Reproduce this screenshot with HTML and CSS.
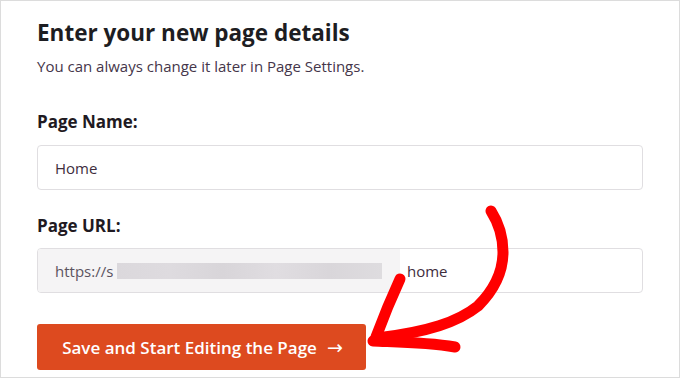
FILE: index.html
```html
<!DOCTYPE html>
<html>
<head>
<meta charset="utf-8">
<link rel="stylesheet" href="styles.css">
</head>
<body>
<div class="frame">
  <h1 class="title">Enter your new page details</h1>
  <p class="sub">You can always change it later in Page Settings.</p>
  <label class="label label-name">Page Name:</label>
  <div class="input"><span class="value">Home</span></div>
  <label class="label label-url">Page URL:</label>
  <div class="input url">
    <div class="prefix"><span class="proto">https://s</span><span class="blur"></span></div>
    <div class="slug">home</div>
  </div>
  <div class="actions">
    <button class="btn">Save and Start Editing the Page <span class="arr">&rarr;</span></button>
  </div>
  <svg class="arrow" width="680" height="378" viewBox="0 0 680 378">
    <g fill="none" stroke="#ff0000" stroke-linecap="round" stroke-linejoin="round">
      <path d="M491 211 C 498 222, 503 236, 503 252 C 503 272, 494 290, 478 306 C 458 322, 428 332, 377 338" stroke-width="11"/>
      <path d="M400 279 C 394 292, 386 310, 376 337" stroke-width="11"/>
      <path d="M373 341 C 395 342, 425 342, 455 347" stroke-width="11"/>
    </g>
  </svg>
</div>
</body>
</html>
```
FILE: styles.css
```css
html, body {
  margin: 0;
  padding: 0;
  background: #ffffff;
}
body {
  font-family: "Open Sans", "Noto Sans", sans-serif;
}
.frame {
  position: relative;
  box-sizing: border-box;
  width: 680px;
  height: 378px;
  border: 1px solid #dcdcdc;
  padding: 17px 36px 0 36px;
  display: flex;
  flex-direction: column;
  overflow: hidden;
}
.title {
  margin: 0;
  font-size: 22.5px;
  line-height: 30px;
  font-weight: 700;
  color: #1d1d22;
}
.sub {
  margin: 8px 0 0 0;
  font-size: 15px;
  line-height: 20px;
  color: #45364a;
}
.label {
  display: block;
  font-size: 17px;
  line-height: 24px;
  font-weight: 700;
  color: #1f1a22;
}
.label-name { margin-top: 34px; }
.label-url { margin-top: 24px; }
.input {
  box-sizing: border-box;
  height: 45px;
  width: 606px;
  border: 1px solid #e0dee1;
  border-radius: 4px;
  display: flex;
  align-items: center;
  font-size: 15px;
  color: #3e2d3d;
  background: #ffffff;
}
.label-name + .input { margin-top: 11px; }
.label-url + .input { margin-top: 10px; }
.value { padding-left: 17px; }
.url { overflow: hidden; }
.prefix {
  height: 100%;
  width: 362px;
  background: #f5f4f5;
  display: flex;
  align-items: center;
  padding-left: 17px;
  box-sizing: border-box;
  color: #5b5360;
}
.blur {
  display: block;
  width: 265px;
  height: 16px;
  margin-left: 4px;
  background: linear-gradient(90deg, #dbd8dc 0%, #dedbdf 20%, #d8d5d9 40%, #e0dde1 60%, #d9d6da 80%, #dedcdf 100%);
  filter: blur(0.6px);
}
.slug {
  padding-left: 7px;
  color: #3e2d3d;
}
.actions {
  margin-top: 31px;
  display: flex;
}
.btn {
  box-sizing: border-box;
  width: 329px;
  height: 46px;
  border: none;
  border-radius: 3px;
  background: #dd4a1f;
  color: #ffffff;
  font-family: "Open Sans", "Noto Sans", sans-serif;
  font-size: 17px;
  font-weight: 600;
  padding: 0 0 0 2px;
  display: flex;
  align-items: center;
  justify-content: center;
}
.arr {
  margin-left: 10px;
  font-family: "DejaVu Sans", sans-serif;
  font-weight: 400;
  font-size: 19px;
  line-height: 1;
}
.arrow {
  position: absolute;
  left: -1px;
  top: -1px;
  pointer-events: none;
}
```
